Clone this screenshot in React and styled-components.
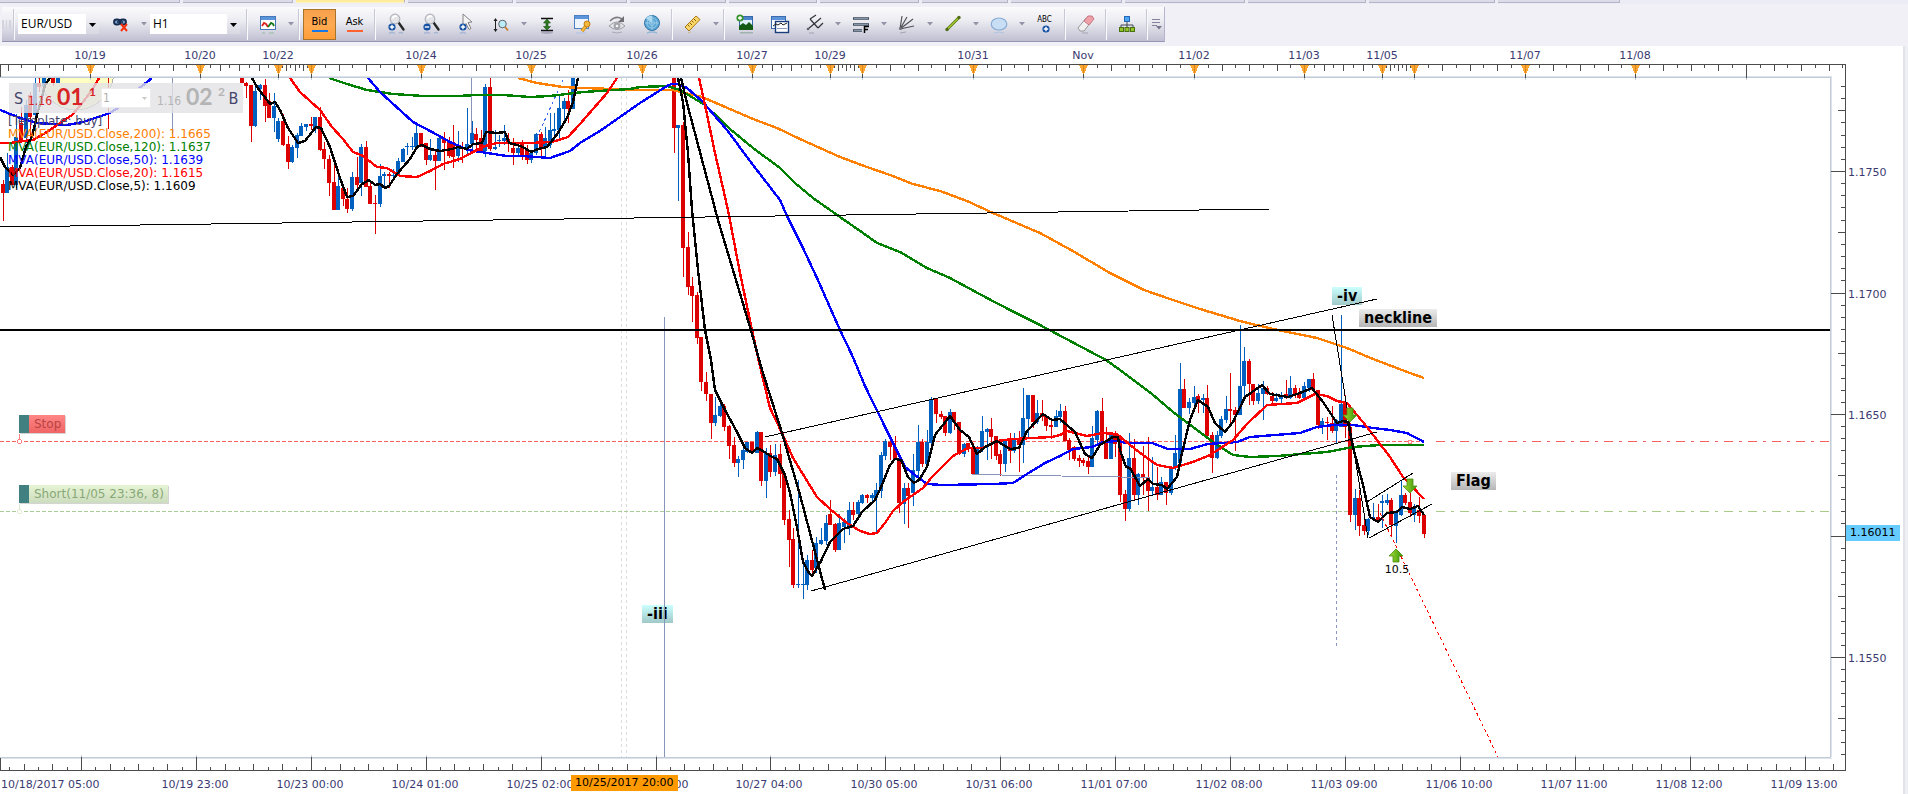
import React from "react";
import styled, { createGlobalStyle, css } from "styled-components";

const GlobalStyle = createGlobalStyle`
  * { box-sizing: border-box; }
  body {
    margin: 0;
    background: #eeeef5;
    font-family: "DejaVu Sans", Verdana, sans-serif;
    font-size: 11px;
  }
`;

/* ---------- page frame ---------- */

const Page = styled.div`
  display: flex;
  flex-direction: column;
  min-height: 100vh;
`;

const TabStrip = styled.div`
  display: flex;
  gap: 3px;
  height: 4px;
  background: #ececf4;
  overflow: hidden;
`;

const TabEdge = styled.div`
  flex: none;
  width: ${(p) => p.$width}px;
  height: 3px;
  background: ${(p) => (p.$active ? "#ffeb9c" : "#dcdce8")};
  border-bottom: 1px solid ${(p) => (p.$active ? "#fff3c4" : "#b4b4c8")};
  border-right: 1px solid #b4b4c8;
`;

const ToolbarZone = styled.div`
  display: flex;
  height: 42px;
  padding: 3px 0 4px 2px;
  background: #f0f0f6;
`;

/* ---------- toolbar ---------- */

const Toolbar = styled.div`
  display: flex;
  align-items: center;
  height: 35px;
  background: linear-gradient(#fbfbfd 0%, #ececf2 40%, #d6d6e2 70%, #bfbfd2 100%);
  border-bottom: 1px solid #9494b4;
  border-right: 1px solid #b4b4cc;
`;

const Grip = styled.div`
  width: 9px;
  height: 9px;
  border: solid #d4d4de;
  border-width: 0 2px;
  background: linear-gradient(90deg, transparent 40%, #d4d4de 40%, #d4d4de 60%, transparent 60%);
  background-clip: padding-box;
`;

const Separator = styled.div`
  width: 6px;
  height: 31px;
  background: linear-gradient(90deg, transparent 2px, #c8c8d6 2px, #c8c8d6 3px, #fafafc 3px, #fafafc 4px, transparent 4px);
`;

const ComboBox = styled.label`
  position: relative;
  display: flex;
  width: ${(p) => p.$width}px;
  height: 20px;
  margin: 0 4px 0 1px;
  background: #fff;
`;

const ComboSelect = styled.select`
  flex: 1;
  appearance: none;
  border: 0;
  padding: 0 16px 1px 3px;
  background: linear-gradient(#f4f4f8, #d8d8e2) right / 13px 100% no-repeat;
  color: #000;
  font-family: "Open Sans", "Segoe UI", sans-serif;
  font-size: 12px;
  line-height: 18px;
`;

const ComboArrow = styled.svg`
  position: absolute;
  right: 3px;
  top: 9px;
  pointer-events: none;
`;

const ToolButton = styled.button`
  display: flex;
  align-items: center;
  justify-content: center;
  width: ${(p) => (p.$narrow ? 11 : 35)}px;
  height: 31px;
  padding: 0;
  border: 0;
  background: none;
`;

const PriceSideButton = styled.button`
  display: flex;
  flex-direction: column;
  align-items: center;
  justify-content: center;
  gap: 2px;
  width: 33px;
  height: 31px;
  margin: 0 1px;
  padding: 0;
  border: 1px solid transparent;
  background: none;
  color: #000;
  font-family: "DejaVu Sans Condensed", "DejaVu Sans", sans-serif;
  font-size: 11px;
  line-height: 12px;
  ${(p) =>
    p.$active &&
    css`
      border-color: #a8742c;
      background: linear-gradient(#f6a04c, #ffab52 50%, #ff9c38);
    `}
`;

const Underline = styled.span`
  width: 16px;
  height: 2px;
  background: ${(p) => p.$color};
`;

const OverflowButton = styled(ToolButton)`
  width: 14px;
`;

/* ---------- toolbar icons ---------- */

const Icon = ({ children }) => (
  <svg width="20" height="22" viewBox="0 0 20 22" aria-hidden="true">
    {children}
  </svg>
);

const DropIcon = () => (
  <svg width="6" height="4" viewBox="0 0 6 4" aria-hidden="true">
    <path d="M0 0h6L3 3.6z" fill="#9494a8" />
  </svg>
);

const PlusDot = ({ x, y, minus }) => (
  <g>
    <circle cx={x} cy={y} r="3.6" fill="#1450a4" />
    <path d={`M${x - 2.2} ${y}h4.4${minus ? "" : `M${x} ${y - 2.2}v4.4`}`} stroke="#fff" strokeWidth="1.4" />
  </g>
);

const LinkOffIcon = () => (
  <Icon>
    <g fill="#7c9cc4" stroke="#142c50" strokeWidth="1.800">
      <rect x="3" y="6.500" width="6" height="5" rx="2.500" />
      <rect x="9" y="6.500" width="6" height="5" rx="2.500" />
    </g>
    <path d="M6 9h6" stroke="#142c50" strokeWidth="1.600" />
    <path d="M10 11l6 7M16 11l-6 7" stroke="#f8300c" strokeWidth="2" />
  </Icon>
);

const ChartWindowIcon = () => (
  <Icon>
    <rect x="2.500" y="3.500" width="15" height="13" fill="#fff" stroke="#4478b8" />
    <path d="M3 4h14v3H3z" fill="#5c94dc" />
    <path d="M4 13l2-3 2 1 2 3" fill="none" stroke="#e02020" strokeWidth="1.800" />
    <path d="M10 14l3-4 2 1 1 2" fill="none" stroke="#187818" strokeWidth="1.800" />
    <path d="M4 19h3v2H4zM11 19h5v2h-5z" fill="#a8c0b4" opacity=".7" />
  </Icon>
);

const MagnifierIcon = ({ minus }) => (
  <Icon>
    <path d="M12.500 9.500l5 7" stroke="#282828" strokeWidth="2.400" strokeLinecap="round" />
    <circle cx="9" cy="6" r="4.800" fill="#e4e4e8" stroke="#b4b4bc" strokeWidth="1.200" />
    <path d="M6.500 5.500a3 3 0 0 1 4.500-2" stroke="#fff" strokeWidth="1.800" fill="none" />
    <PlusDot x={6} y={14} minus={minus} />
    <path d="M3 20.500q3-2 6 0M13 20q2-1 4 0" stroke="#8ca4cc" strokeWidth="1.500" fill="none" opacity=".6" />
  </Icon>
);

const CursorPlusIcon = () => (
  <Icon>
    <path d="M7 1l9 8-4 .5 3 6-2 1-3-6-3 3z" fill="#f4f4f4" stroke="#848488" />
    <PlusDot x={7} y={14} />
    <path d="M4 20.500q3-2 6 0" stroke="#8ca4cc" strokeWidth="1.500" fill="none" opacity=".6" />
  </Icon>
);

const MeasureZoomIcon = () => (
  <Icon>
    <path d="M4.500 6v12" fill="none" stroke="#202020" />
    <path d="M2.500 8l2-3 2 3zM2.500 16l2 3 2-3z" fill="#202020" />
    <circle cx="11.500" cy="11" r="3.800" fill="#bcecf8" stroke="#606468" />
    <path d="M14 14l3 3.500" stroke="#c47828" strokeWidth="1.800" />
  </Icon>
);

const VerticalFitIcon = () => (
  <Icon>
    <path d="M4 5.500h12M4 17.500h12" stroke="#101010" strokeWidth="1.400" />
    <path d="M10 6l3.500 4H11v3.500h2.500L10 17l-3.500-3.500H9V10H6.500z" fill="#2c7c20" stroke="#184c10" strokeWidth=".6" />
    <ellipse cx="10" cy="19.500" rx="6" ry="1.500" fill="#8c8ca0" opacity=".6" />
  </Icon>
);

const WindowKeyIcon = () => (
  <Icon>
    <rect x="2.500" y="2.500" width="14" height="13" fill="#eef4fc" stroke="#4c80c0" />
    <path d="M3 3h13v3H3z" fill="#5c94dc" />
    <path d="M10 18l4-5" stroke="#c07c10" strokeWidth="3.600" />
    <path d="M10 18l4-5" stroke="#f4b83c" strokeWidth="2.200" />
    <circle cx="15" cy="11" r="3" fill="#f4b83c" stroke="#c07c10" />
    <path d="M4 19h10v2H4z" fill="#b8c8e4" opacity=".7" />
  </Icon>
);

const EyeRefreshIcon = () => (
  <Icon>
    <path d="M3 8q6-6 12-2" fill="none" stroke="#808084" strokeWidth="1.600" />
    <path d="M17 3v6h-6z" fill="#707074" />
    <path d="M2 13q8-8 16 0q-8 7-16 0z" fill="#e4e4e8" stroke="#9c9ca4" />
    <circle cx="10" cy="13" r="3.400" fill="#a4a4ac" />
    <circle cx="10" cy="13" r="1.300" fill="#f4f4f4" />
    <path d="M5 19q5 2 10 0" stroke="#a8a8b8" fill="none" />
  </Icon>
);

const RadarIcon = () => (
  <Icon>
    <circle cx="10" cy="10" r="7.500" fill="#58a4d4" stroke="#3478a8" />
    <path d="M10 10V2.500a7.500 7.500 0 0 0-6 3z" fill="#b0dcf4" />
    <circle cx="10" cy="10" r="5" fill="none" stroke="#a4d0e8" strokeWidth=".8" />
    <circle cx="10" cy="10" r="2.500" fill="none" stroke="#a4d0e8" strokeWidth=".8" />
    <path d="M10 3v14M3 10h14" stroke="#a4d0e8" strokeWidth=".8" />
    <path d="M5 20q5-2 10 0" stroke="#7cacd0" strokeWidth="1.500" fill="none" opacity=".7" />
  </Icon>
);

const RulerIcon = () => (
  <Icon>
    <path d="M2 14L13 3l4 3.500L6 18z" fill="#fcd868" stroke="#a87818" />
    <path d="M5 12l1.500 1.500M7 10l2 2M9 8l1.500 1.500M11 6l2 2" stroke="#805810" />
    <path d="M5 20l3-1" stroke="#c8b078" opacity=".7" />
  </Icon>
);

const AddImageIcon = () => (
  <Icon>
    <rect x="4.500" y="3.500" width="13" height="13" fill="#e0f0fc" stroke="#3468a8" />
    <path d="M5 4h12v3H5z" fill="#4c84cc" />
    <path d="M4 17v-4l4-3 3 2 3-3 4 4v4z" fill="#145c14" />
    <circle cx="5" cy="5" r="3.600" fill="#38942c" />
    <path d="M3 5h4M5 3v4" stroke="#fff" strokeWidth="1.300" />
    <path d="M5 19h13v1.500H5z" fill="#7c9c8c" opacity=".6" />
  </Icon>
);

const TwoWindowsIcon = () => (
  <Icon>
    <rect x="1.500" y="3.500" width="14" height="12" fill="#fff" stroke="#3c6cac" />
    <path d="M2 4h13v3H2z" fill="#5c94dc" />
    <rect x="5.500" y="8.500" width="13" height="11" fill="#fff" stroke="#183c7c" strokeWidth="1.400" />
    <path d="M3 13l3-2 2 1 3-2 2 2 4-2" fill="none" stroke="#202020" />
    <path d="M7 15.500h10" stroke="#8c9cc0" />
  </Icon>
);

const PitchforkIcon = () => (
  <Icon>
    <path d="M3 16l6-5M5 6l8 9M5 6l6-4M9 11l7-6M13 15l5-5" fill="none" stroke="#303438" strokeWidth="1.200" />
    <circle cx="3" cy="16" r="1.300" fill="#606468" />
    <path d="M4 20h5" stroke="#a0a0b4" />
  </Icon>
);

const FibLinesIcon = () => (
  <Icon>
    <path d="M2 5.500h16M2 11.500h16M2 17.500h9" stroke="#384858" strokeWidth="2.600" />
    <path d="M3 5.500h14M3 11.500h14M3 17.500h8" stroke="#9cacbc" strokeWidth=".8" />
    <path d="M13.500 20v-6.500H18M13.500 16.500h3.500" fill="none" stroke="#000" strokeWidth="1.500" />
  </Icon>
);

const FanIcon = () => (
  <Icon>
    <path d="M3 16L5 3M3 16l7-12M3 16L16 6M3 16l14-3" stroke="#505458" strokeWidth="1.200" />
    <circle cx="3.500" cy="15.500" r="1.600" fill="#707478" />
    <path d="M3 20l6-1" stroke="#a4a4b4" />
  </Icon>
);

const TrendLineIcon = () => (
  <Icon>
    <path d="M4 16.500L16 4.500" stroke="#4c6c08" strokeWidth="2.600" />
    <path d="M4 16.500L16 4.500" stroke="#a4cc2c" strokeWidth="1.400" />
    <circle cx="4" cy="16.500" r="1.700" fill="#506c18" />
    <circle cx="16" cy="4.500" r="1.700" fill="#506c18" />
  </Icon>
);

const EllipseIcon = () => (
  <Icon>
    <ellipse cx="10" cy="11" rx="7.800" ry="6" fill="#c8def4" stroke="#88acd4" strokeWidth="1.200" />
    <path d="M5 20q5-2 10 0" stroke="#b0c4e0" fill="none" />
  </Icon>
);

const AbcLabel = styled.span`
  font-family: "DejaVu Sans Condensed", "DejaVu Sans", sans-serif;
  font-size: 8px;
  line-height: 8px;
`;

const TextToolButton = styled(ToolButton)`
  flex-direction: column;
  color: #000;
`;

const EraserIcon = () => (
  <Icon>
    <path d="M2 15L10 5l5 4-7 9H4z" fill="#f0f0f0" stroke="#98989c" />
    <path d="M8 8l4-5h4l2 3-5 6z" fill="#f0a0a8" stroke="#c47880" />
    <path d="M6 20h6" stroke="#a4a4b4" />
  </Icon>
);

const TreeIcon = () => (
  <Icon>
    <path d="M10 8v6M4 15v-3h12v3" fill="none" stroke="#404858" />
    <rect x="7.500" y="3.500" width="5" height="5" fill="#4ca4f4" stroke="#2468b4" />
    <g fill="#94c42c" stroke="#48700c">
      <rect x="2.500" y="14.500" width="4" height="4" />
      <rect x="8" y="14.500" width="4" height="4" />
      <rect x="13.500" y="14.500" width="4" height="4" />
    </g>
  </Icon>
);

const OverflowIcon = () => (
  <svg width="10" height="12" viewBox="0 0 10 12" aria-hidden="true">
    <path d="M0 1.500h8M0 4.500h8M0 7.500h5" stroke="#84849c" />
    <path d="M4 8h6l-3 3.500z" fill="#74748c" />
  </svg>
);

const Combo = ({ label, value, width }) => (
  <ComboBox $width={width}>
    <ComboSelect aria-label={label} defaultValue={value}>
      <option>{value}</option>
    </ComboSelect>
    <ComboArrow width="7" height="4" viewBox="0 0 7 4" aria-hidden="true">
      <path d="M0 0h7L3.500 4z" fill="#000" />
    </ComboArrow>
  </ComboBox>
);

const Tool = ({ label, icon: IconShape, menu, ...rest }) => (
  <>
    <ToolButton aria-label={label}>
      <IconShape {...rest} />
    </ToolButton>
    {menu && (
      <ToolButton $narrow aria-label={`${label} options`}>
        <DropIcon />
      </ToolButton>
    )}
  </>
);

/* ---------- chart layout ---------- */

const ChartPanel = styled.main`
  flex: 1;
  display: grid;
  grid-template-columns: minmax(0, 1fr) 73px;
  grid-template-rows: 32px minmax(0, 1fr) 37px;
  margin-right: 3px;
  background: #fff;
  border-right: 2px solid #e2e2ea;
`;

const AxisSvg = styled.svg`
  display: block;
  width: 100%;
  height: 100%;
  overflow: visible;
  shape-rendering: crispEdges;
`;

const AxisCell = styled.div`
  position: relative;
  min-width: 0;
`;

const AxisText = styled.text`
  fill: ${(p) => (p.$dark ? "#000" : "#3a3a70")};
  font-family: "DejaVu Sans", Verdana, sans-serif;
  font-size: 11px;
`;

const Plot = styled.section`
  position: relative;
  overflow: hidden;
  min-width: 0;
`;

const PlotSvg = styled.svg`
  position: absolute;
  inset: 0;
  width: 100%;
  height: 100%;
  shape-rendering: crispEdges;
`;

const AxisFlag = styled.output`
  position: absolute;
  left: ${(p) => p.$x}px;
  top: ${(p) => p.$y}px;
  padding: 0 4px;
  background: ${(p) => p.$color};
  color: #000;
  font-size: 11px;
  line-height: 16px;
  white-space: nowrap;
`;

/* ---------- overlays on the plot ---------- */

const labelLook = {
  wave: "linear-gradient(#ccffff, #a0c8c8)",
  note: "linear-gradient(#ececec, #b6b6b6)",
};

const Annotation = styled.div`
  position: absolute;
  left: ${(p) => p.$x}px;
  top: ${(p) => p.$y}px;
  padding: 0 5px;
  background: ${(p) => labelLook[p.$look]};
  color: #000;
  font-family: "DejaVu Sans Condensed", "DejaVu Sans", sans-serif;
  font-size: 16px;
  font-weight: 700;
  line-height: 18px;
`;

const OrderTag = styled.div`
  position: absolute;
  left: 19px;
  top: ${(p) => p.$y}px;
  padding: 0 4px 0 5px;
  border-left: 10px solid #408080;
  background: ${(p) => (p.$stop ? "linear-gradient(#ff8686, #f06464)" : "linear-gradient(#e6f4d4, #ccdcbe)")};
  background-clip: padding-box;
  box-shadow: 1px 1px 0 #d4d4d4;
  color: ${(p) => (p.$stop ? "#b84444" : "#88a878")};
  font-size: 12px;
  line-height: 18px;
`;

const DealPanel = styled.form`
  position: absolute;
  left: 9px;
  top: 5px;
  display: flex;
  align-items: center;
  width: 234px;
  height: 30px;
  padding: 0 2px;
  background: rgba(226, 226, 230, 0.8);
`;

const SideButton = styled.button`
  padding: 0;
  width: 15px;
  border: 0;
  background: none;
  color: #44446c;
  font-family: "DejaVu Sans Condensed", "DejaVu Sans", sans-serif;
  font-size: 16px;
`;

const Quote = styled.div`
  display: flex;
  align-items: baseline;
  width: 71px;
  padding-left: 2px;
  color: ${(p) => (p.$bid ? "#d82424" : "#b4b4b4")};
  line-height: 24px;
`;

const QuoteBase = styled.span`
  width: 29px;
  font-family: "DejaVu Sans Condensed", "DejaVu Sans", sans-serif;
  font-size: 12px;
`;

const QuoteBig = styled.strong`
  width: 32px;
  font-family: Lato, sans-serif;
  font-size: 23px;
`;

const QuoteTick = styled.span`
  align-self: flex-start;
  font-family: Lato, sans-serif;
  font-size: 12px;
  font-weight: 700;
  line-height: 16px;
`;

const AmountBox = styled.label`
  position: relative;
  width: 50px;
  height: 20px;
  margin: 0 4px;
`;

const AmountInput = styled.input`
  width: 50px;
  height: 20px;
  padding: 0 1px;
  border: 1px solid #ececee;
  background: #fff;
  color: #b0b0b0;
  font-family: "DejaVu Sans Condensed", "DejaVu Sans", sans-serif;
  font-size: 12px;
`;

const AmountArrow = styled.svg`
  position: absolute;
  right: 4px;
  top: 9px;
`;

const Legend = styled.ul`
  position: absolute;
  left: 8px;
  top: 37px;
  margin: 0;
  padding: 0;
  list-style: none;
  font-size: 12px;
  line-height: 13px;
`;

const LegendLine = styled.li`
  color: ${(p) => p.$color};
`;

/* ---------- chart data ---------- */

const BAR_STEP = 4.6;

/* each bar: direction, high, body top, body bottom, low */
const SERIES = [
  {
    x: 3,
    bars: `r180,184,193,221 b153,167,193,193 r165,167,185,185 b114,137,185,188 r107,123,140,143 b100,105,138,143
    r92,95,117,138 b78,83,115,132 r78,83,87,92 b78,78,86,92 r78,78,78,78 r78,78,83,86 b78,78,83,83`,
  },
  {
    x: 242,
    bars: `r78,78,83,83 r82,83,86,98 r85,85,126,142 b87,91,126,127 b84,85,89,100 r79,85,106,122 r93,101,118,118
    b93,106,118,132 b118,121,139,142 r114,121,145,146 r136,144,162,169 b145,147,162,163 b133,135,148,158
    b123,126,136,136 b124,124,127,131 r117,124,126,130 b117,117,129,133 r107,117,150,151 r142,149,159,169
    r155,159,183,196 r165,182,210,210 b175,186,210,210 r185,188,199,206 r188,199,209,213 b172,177,209,211
    r157,177,185,190 b144,147,183,196 r141,147,187,187 r183,186,204,204 r195,203,204,234 b164,176,204,207
    b172,174,176,187 r172,174,176,188 b169,175,176,180 b158,161,175,176 b148,149,162,162 b143,146,147,155
    b137,146,147,150 b125,133,147,150 r133,133,145,147 r143,143,160,165 b139,155,160,161 r150,155,161,190
    b137,138,161,161 r132,138,143,170 r137,142,156,158 r125,142,157,168 b131,147,156,162 r142,147,149,163
    b108,144,150,154 b121,133,144,150 r128,134,140,149 r130,138,152,153 b84,87,151,157 r78,87,149,151
    b130,147,149,150 b135,140,141,147 b125,138,141,145 r133,139,144,152 r138,148,153,165 b145,148,153,157
    r140,143,157,160 r145,150,160,164 b150,153,160,163 b133,134,153,155 r132,134,147,157 b127,138,148,157
    b113,130,145,148 b113,129,131,142 b96,108,130,139 b98,101,109,122 r90,101,109,123 b78,78,109,109`,
  },
  {
    x: 674.3,
    bars: `r78,78,128,153 b125,125,128,201 r122,125,248,277 r232,247,287,295 r277,286,296,322 r292,295,338,344
    r337,337,382,391 r372,382,394,401 r394,394,423,439 b397,415,423,426 b399,406,416,417 r404,406,427,431
    r425,426,446,459 r437,445,463,467 b456,459,463,477 b442,450,460,469 b442,442,452,453 r442,442,452,453
    b431,432,453,453 r432,432,481,486 b448,453,481,498 r445,453,472,477 b444,455,472,476 r444,454,474,488
    r472,473,520,525 r510,519,540,567 r528,539,585,588 b480,584,585,588 b560,584,585,599 b555,560,585,590
    r550,560,570,573 b537,543,568,573 b528,540,544,545 b515,523,541,545 r500,514,525,525 r523,524,550,552
    b514,523,550,550 b518,522,527,543 b502,510,526,535 r502,510,515,520 b500,502,514,518 b494,495,503,504
    r494,495,498,503 b493,495,498,503 b483,490,498,532 b452,455,491,498 b439,441,456,460 r435,442,447,460
    r436,447,459,460 r458,459,503,513 b483,488,504,524 r483,488,496,528 b454,470,493,506 b425,442,471,481
    r439,442,464,467 b430,442,464,468 b397,399,443,445 r398,399,414,423 r411,414,417,419 r416,416,433,436
    b409,412,433,434 r412,412,422,430 r422,422,454,455 b443,444,454,457 r443,443,448,452 r443,447,474,474
    b446,447,474,474 b416,431,448,452 b428,429,432,460 r418,429,437,459 r436,436,456,460 r450,454,464,476
    b439,440,464,472 r433,439,451,463 b433,438,451,453 r431,438,445,472 b388,418,445,463 b395,395,419,437
    r395,395,422,428 b400,413,422,424 r400,413,417,421 r415,416,426,431 r421,425,427,439 b410,416,427,427
    b404,411,417,423 r406,411,441,441 r438,440,450,460 r446,447,459,461 r455,458,461,467 r458,460,463,466
    r456,461,467,474 b426,438,467,467 b410,411,440,445 r398,411,441,441 r427,441,459,459 b433,435,459,459
    r431,435,444,457 r435,438,495,502 r490,494,509,521 b433,458,509,511 r439,458,495,501 b473,474,495,505
    r446,474,477,495 r437,477,491,511 b457,487,491,495 r467,487,495,500 b477,482,495,495 r482,482,493,505
    b467,468,493,495 b435,453,468,470 b363,389,463,467 r379,389,408,408 b398,402,408,414 b386,397,403,407
    r394,396,400,413 b394,398,400,413 r385,398,436,438 r432,435,458,473 b431,435,458,459 b416,419,436,438
    b396,409,420,423 r373,409,411,427 r407,410,415,451 b325,386,415,415 b347,361,386,397 r359,361,384,405
    r384,384,401,405 b384,393,401,404 b381,388,394,420 r386,388,394,395 r392,396,401,405 b393,398,401,402
    b392,397,399,403 r380,394,398,399 b376,388,398,399 r385,388,395,398 r388,393,398,399 b382,386,398,399
    b379,379,388,392 r373,379,390,391 r390,390,425,429 b418,421,426,434 r417,422,423,440 r406,423,431,433
    b419,420,431,443 b315,404,427,427 r395,404,427,438 r423,427,515,522 b489,498,515,530 r490,498,526,536
    r513,525,531,535 b518,519,531,535 b503,517,519,520 r504,517,521,522 b495,501,503,528 b494,500,503,505
    r498,500,525,537 b510,512,526,543 b480,495,515,516 r493,495,503,505 r493,502,513,517 b504,507,515,522
    r497,510,516,523 r515,515,534,538`,
  },
];

const CANDLES = SERIES.flatMap(({ x, bars }) =>
  bars
    .trim()
    .split(/\s+/)
    .map((bar, i) => {
      const [high, top, bottom, low] = bar.slice(1).split(",").map(Number);
      return { x: Math.floor(x + i * BAR_STEP), up: bar[0] === "b", high, top, bottom, low };
    })
    .filter((bar) => bar.low > bar.high)
);

const AVERAGES = [
  {
    color: "#ff8000",
    lines: [
      "518,78 537,83 563,87 583,88 613,89 640,90 673,90 702,97 723,106 753,119 777,128 800,139 840,157 867,167 890,175 913,184 940,191 967,201 993,213 1040,233 1071,250 1110,273 1144,290 1170,299 1200,309 1240,321 1273,329 1317,338 1347,348 1373,359 1410,373 1424,378",
    ],
  },
  {
    color: "#008000",
    lines: [
      "329,78 347,84 367,90 393,94 423,96 457,96 477,95 503,95 530,97 550,96 583,92 630,89 640,87 667,86 680,90 705,105 730,129 753,148 780,168 795,183 813,198 840,217 863,233 877,243 900,252 927,268 950,278 987,298 1010,310 1040,325 1106,360 1120,370 1152,394 1173,412 1193,427 1213,442 1233,455 1250,457 1277,456 1327,452 1353,447 1380,445 1424,445",
    ],
  },
  {
    color: "#0000ff",
    lines: [
      "0,110 20,118 37,123 67,125 83,122 110,113 127,102 137,90 152,78",
      "368,78 380,92 413,122 432,132 450,142 468,150 487,153 507,156 523,156 537,157 550,158 570,151 580,143 600,131 610,124 640,103 667,86 672,84 678,84 687,88 702,101 727,130 753,165 780,200 787,216 803,248 817,278 840,330 852,355 865,386 887,431 905,467 915,475 927,484 943,485 993,484 1013,483 1027,474 1045,463 1060,456 1073,449 1092,447 1103,442 1117,441 1127,443 1152,443 1168,449 1190,449 1208,444 1237,442 1250,437 1275,435 1300,433 1317,427 1333,425 1353,425 1373,428 1390,430 1407,433 1424,442",
    ],
  },
  {
    color: "#ff0000",
    lines: [
      "0,143 10,143 23,141 33,140 47,132 60,123 72,115 83,102 92,90 99,78",
      "290,78 300,92 320,110 332,127 343,139 353,152 363,156 377,167 387,168 400,176 417,177 430,171 443,164 460,159 475,151 485,146 497,143 530,143 552,142 568,137 580,124 593,109 607,93 617,78",
      "699,78 705,105 715,153 728,210 740,273 752,330 759,362 770,408 782,433 793,458 817,497 830,509 847,523 860,531 870,534 877,533 885,523 893,511 903,502 923,488 932,477 953,456 968,448 983,448 997,441 1013,439 1052,437 1060,435 1067,431 1087,436 1103,433 1117,434 1130,445 1143,455 1157,465 1173,468 1193,462 1210,455 1233,440 1247,424 1267,405 1297,403 1315,394 1327,396 1337,401 1347,403 1367,427 1390,457 1403,477 1424,499",
    ],
  },
  {
    color: "#000000",
    lines: [
      "0,157 5,167 13,175 20,168 26,147 32,137 37,115 42,97 45,85 50,78",
      "252,78 257,87 270,104 275,102 280,110 288,128 298,143 305,141 316,127 321,128 330,147 340,178 347,197 353,196 362,184 369,180 375,185 380,184 385,188 389,186 397,174 410,159 417,147 422,145 430,149 440,151 452,149 458,147 467,149 473,144 482,143 486,132 497,133 505,132 509,143 517,145 523,147 531,152 538,149 547,147 558,133 567,118 573,102 578,78",
      "678,78 683,102 688,153 692,210 698,270 705,330 711,360 715,390 725,410 737,432 745,448 752,453 757,448 763,451 772,457 777,459 785,475 790,493 797,527 803,562 809,573 812,576 820,563 830,542 843,529 853,526 862,512 875,500 882,485 890,465 895,459 901,460 908,477 914,483 919,480 927,467 935,435 950,416 960,430 969,437 977,454 985,447 997,441 1010,449 1019,448 1027,431 1043,414 1052,420 1060,419 1075,432 1085,454 1092,458 1100,445 1113,437 1118,437 1120,450 1126,467 1130,468 1140,486 1148,479 1153,484 1162,485 1167,489 1177,477 1182,453 1190,420 1198,400 1208,407 1215,423 1225,432 1233,422 1245,397 1262,385 1270,394 1288,397 1300,393 1312,388 1323,402 1337,423 1343,421 1348,422 1353,447 1363,485 1370,517 1378,522 1387,513 1397,512 1402,507 1410,509 1418,506 1424,515",
      "681,78 688,107 718,220 750,327 762,370 782,433 800,495 825,590",
    ],
  },
];

const TREND_LINES = [
  "0,227 1270,209",
  "765,437 1377,299",
  "811,591 1377,432",
  "1332,315 1368,538",
  "1367,502 1413,473",
  "1369,538 1432,504",
];

const LEGEND = [
  ["[Template: buy]", "#44446c"],
  ["MVA(EUR/USD.Close,200): 1.1665", "#ff8000"],
  ["MVA(EUR/USD.Close,120): 1.1637", "#008000"],
  ["MVA(EUR/USD.Close,50): 1.1639", "#0000ff"],
  ["MVA(EUR/USD.Close,20): 1.1615", "#ff0000"],
  ["MVA(EUR/USD.Close,5): 1.1609", "#000000"],
];

const SESSIONS = [
  [-20],
  [90, "10/19"],
  [200, "10/20"],
  [278, "10/22"],
  [311, ""],
  [421, "10/24"],
  [531, "10/25"],
  [642, "10/26"],
  [752, "10/27"],
  [830, "10/29"],
  [862, ""],
  [973, "10/31"],
  [1083, "Nov"],
  [1194, "11/02"],
  [1304, "11/03"],
  [1382, "11/05"],
  [1414, ""],
  [1525, "11/07"],
  [1635, "11/08"],
  [1746],
  [1856],
];

const TIME_LABELS = [
  "", "10/19 23:00", "10/23 00:00", "10/24 01:00", "10/25 02:00", "10/26 03:00", "10/27 04:00", "10/30 05:00",
  "10/31 06:00", "11/01 07:00", "11/02 08:00", "11/03 09:00", "11/06 10:00", "11/07 11:00", "11/08 12:00", "11/09 13:00",
];

const TAB_WIDTHS = [180, 110, 109, 105, 111, 96, 88, 99, 86, 111, 120, 118, 126, 122];

const TIME_STEP = 114.9;
const AXIS = "#4c4c4c";
const FRAME = "#c2ccd8";
const FRAME_SOFT = "#dee2ea";

/* ---------- chart parts ---------- */

const SessionAxis = () => (
  <AxisSvg>
    <rect x="0" y="30" width="100%" height="1" fill={FRAME_SOFT} />
    <rect x="0" y="31" width="100%" height="1" fill={FRAME} />
    <rect x="0" y="18" width="100%" height="1" fill={AXIS} />
    <rect x="0" y="18" width="1" height="13" fill={AXIS} />
    {SESSIONS.slice(0, -1).map(([x], i) => {
      const step = (SESSIONS[i + 1][0] - x) / 8;
      return [1, 2, 3, 4, 5, 6, 7].map((k) => {
        const tx = Math.round(x + k * step);
        return tx >= 0 && tx < 1845 ? (
          <rect key={`${i}-${k}`} x={tx} y="19" width="1" height={k % 2 ? 3 : 6} fill={AXIS} />
        ) : null;
      });
    })}
    {SESSIONS.map(([x, label]) =>
      x > 0 && x < 1845 ? (
        <g key={x}>
          <rect x={x} y="19" width="1" height="13" fill={AXIS} />
          {label !== undefined && (
            <>
              <path d={`M${x - 4} 19h9l-4 9h-1z`} fill="#ffa530" />
              <rect x={x} y="19" width="1" height="8" fill="#d88818" />
            </>
          )}
          {label && (
            <AxisText x={x} y="13" textAnchor="middle">
              {label}
            </AxisText>
          )}
        </g>
      ) : null
    )}
  </AxisSvg>
);

const TopCorner = () => (
  <AxisSvg>
    <rect x="0" y="18" width="16" height="1" fill={AXIS} />
    <rect x="15" y="18" width="1" height="14" fill={AXIS} />
    <rect x="0" y="30" width="2" height="1" fill={FRAME_SOFT} />
    <rect x="0" y="31" width="1" height="1" fill={FRAME} />
    <rect x="1" y="31" width="1" height="1" fill={FRAME_SOFT} />
  </AxisSvg>
);

const PriceAxis = () => {
  const ticks = [];
  for (let k = -7; k <= 48; k += 1) {
    const y = Math.round(93 + k * 12.15);
    const len = k % 10 === 0 ? 14 : k % 5 === 0 ? 7 : 4;
    ticks.push(<rect key={k} x={15 - len} y={y} width={len} height="1" fill={AXIS} />);
  }
  return (
    <AxisSvg>
      <rect x="0" y="0" width="1" height="100%" fill={FRAME} />
      <rect x="1" y="0" width="1" height="100%" fill={FRAME_SOFT} />
      <rect x="15" y="0" width="1" height="100%" fill={AXIS} />
      {ticks}
      <AxisText x="18" y="98">1.1750</AxisText>
      <AxisText x="18" y="220">1.1700</AxisText>
      <AxisText x="18" y="341">1.1650</AxisText>
      <AxisText x="18" y="584">1.1550</AxisText>
    </AxisSvg>
  );
};

const TimeAxis = () => {
  const ticks = [];
  for (let k = -5; k <= 122; k += 1) {
    const len = k % 8 === 0 ? 13 : k % 2 === 0 ? 6 : 3;
    ticks.push(
      <rect key={k} x={Math.round(81 + (k * TIME_STEP) / 8)} y={13 - len} width="1" height={len} fill={AXIS} />
    );
  }
  return (
    <AxisSvg>
      <rect x="0" y="0" width="100%" height="1" fill={FRAME} />
      <rect x="0" y="1" width="100%" height="1" fill={FRAME_SOFT} />
      <rect x="0" y="1" width="1" height="13" fill={AXIS} />
      <rect x="0" y="13" width="100%" height="1" fill={AXIS} />
      {ticks}
      <AxisText x="1" y="31">10/18/2017 05:00</AxisText>
      {TIME_LABELS.map((label, i) =>
        label ? (
          <AxisText key={label} x={Math.round(80 + i * TIME_STEP)} y="31" textAnchor="middle">
            {label}
          </AxisText>
        ) : null
      )}
    </AxisSvg>
  );
};

const BottomCorner = () => (
  <AxisSvg>
    <rect x="0" y="0" width="1" height="1" fill={FRAME} />
    <rect x="0" y="1" width="2" height="1" fill={FRAME_SOFT} />
    <rect x="0" y="13" width="16" height="1" fill={AXIS} />
    <rect x="15" y="0" width="1" height="13" fill={AXIS} />
  </AxisSvg>
);

const TradeArrow = ({ x, y, up }) => (
  <path
    d={up ? `M${x} ${y}l7 7h-4v6h-6v-6h-4z` : `M${x} ${y + 14}l-7-7h4v-7h6v7h4z`}
    fill="url(#arrowFill)"
    stroke="#4c9010"
    strokeWidth=".8"
    shapeRendering="auto"
  />
);

/* the drawing keeps its origin at the top of the window; the plot starts 78 below it */
const PriceDrawing = () => (
  <PlotSvg>
    <defs>
      <linearGradient id="arrowFill">
        <stop offset="0" stopColor="#a8dc30" />
        <stop offset="1" stopColor="#34940c" />
      </linearGradient>
    </defs>
    <g transform="translate(0 -78)" fill="none">
      <ellipse cx="76" cy="70" rx="38" ry="40" fill="#ffffc4" stroke="#b0b0a8" />
      {SESSIONS.map(([x]) => (
        <rect key={x} x={x} y="78" width="1" height="2" fill={FRAME} />
      ))}
      {TIME_LABELS.map((label, i) => (
        <rect key={i} x={Math.round(81 + i * TIME_STEP)} y="755" width="1" height="2" fill={FRAME} />
      ))}
      <path d="M621.500 78V757M626.500 78V757" stroke="#dcdcdc" strokeDasharray="3 3" />
      <path d="M172.500 78V134M471.500 78V133M664.500 317V757" stroke="#8894b8" />
      <path d="M0 441.500H1424" stroke="#f86060" strokeDasharray="4 2" />
      <path d="M1436 441.500H1830" stroke="#f86060" strokeDasharray="9 6 3 6" />
      <path d="M0 511.500H1424" stroke="#a8cc98" strokeDasharray="4 2" />
      <path d="M1436 511.500H1830" stroke="#a8cc88" strokeDasharray="9 6 3 6" />
      <path d="M108.500 78V129" stroke="#dd0000" />
      {CANDLES.map((c, i) => (
        <g key={i} fill={c.up ? "#0060c0" : "#dd0000"}>
          <rect x={c.x} y={c.high} width="1" height={c.low - c.high} />
          <rect x={c.x - 2} y={c.top} width="4" height={Math.max(1, c.bottom - c.top)} />
        </g>
      ))}
      <path d="M972 474.500L1150 477.500" stroke="#8894b8" />
      <path d="M537 137L563 80" stroke="#3c6cf0" strokeDasharray="3 3" />
      <path d="M1336.500 475V646" stroke="#8c94c0" strokeDasharray="3 3" />
      {AVERAGES.map(({ color, lines }) =>
        lines.map((points) => (
          <polyline key={points} points={points} stroke={color} strokeWidth="2.400" strokeLinejoin="round" />
        ))
      )}
      <path d="M0 330H1830" stroke="#000" strokeWidth="2" />
      {TREND_LINES.map((points) => (
        <polyline key={points} points={points} stroke="#000" />
      ))}
      <path d="M1380 513L1498 757" stroke="#ff0000" strokeDasharray="3 3" />
      <path d="M19.500 434v5" stroke="#ff8080" />
      <circle cx="19.500" cy="441.500" r="2" fill="#fff" stroke="#ff8080" />
      <path d="M19.500 504v5" stroke="#e0ecd0" />
      <circle cx="19.500" cy="511.500" r="2" fill="#fff" stroke="#e0ecd0" />
      <circle cx="1410" cy="442" r="2" fill="#fff" stroke="#ff8080" />
      <TradeArrow x={1350} y={408} />
      <TradeArrow x={1410} y={479} />
      <TradeArrow x={1396} y={549} up />
      <AxisText $dark x="1397" y="573" textAnchor="middle">10.5</AxisText>
    </g>
  </PlotSvg>
);

const DealTicket = () => (
  <DealPanel onSubmit={(e) => e.preventDefault()}>
    <SideButton type="button" aria-label="Sell">S</SideButton>
    <Quote $bid>
      <QuoteBase>1.16</QuoteBase>
      <QuoteBig>01</QuoteBig>
      <QuoteTick>1</QuoteTick>
    </Quote>
    <AmountBox>
      <AmountInput aria-label="Amount" defaultValue="1" />
      <AmountArrow width="5" height="3" viewBox="0 0 5 3" aria-hidden="true">
        <path d="M0 0h5L2.500 3z" fill="#c8c8c8" />
      </AmountArrow>
    </AmountBox>
    <Quote>
      <QuoteBase>1.16</QuoteBase>
      <QuoteBig>02</QuoteBig>
      <QuoteTick>2</QuoteTick>
    </Quote>
    <SideButton type="button" aria-label="Buy">B</SideButton>
  </DealPanel>
);

export default function App() {
  return (
    <Page>
      <GlobalStyle />
      <TabStrip>
        {TAB_WIDTHS.map((w, i) => (
          <TabEdge key={i} $width={w} $active={i === 2} />
        ))}
      </TabStrip>
      <ToolbarZone>
        <Toolbar role="toolbar" aria-label="Chart tools">
          <Grip />
          <Separator />
          <Combo label="Instrument" value="EUR/USD" width={81} />
          <Tool label="Unlink chart" icon={LinkOffIcon} menu />
          <Combo label="Period" value="H1" width={90} />
          <Separator />
          <Tool label="Chart type" icon={ChartWindowIcon} menu />
          <Separator />
          <PriceSideButton $active aria-pressed="true">
            Bid
            <Underline $color="#1478e8" />
          </PriceSideButton>
          <PriceSideButton aria-pressed="false">
            Ask
            <Underline $color="#ff6030" />
          </PriceSideButton>
          <Separator />
          <Tool label="Zoom in" icon={MagnifierIcon} />
          <Tool label="Zoom out" icon={MagnifierIcon} minus />
          <Tool label="Pointer zoom" icon={CursorPlusIcon} />
          <Tool label="Scale" icon={MeasureZoomIcon} menu />
          <Tool label="Fit height" icon={VerticalFitIcon} />
          <Tool label="Chart properties" icon={WindowKeyIcon} />
          <Tool label="Refresh view" icon={EyeRefreshIcon} />
          <Tool label="Data window" icon={RadarIcon} />
          <Separator />
          <Tool label="Ruler" icon={RulerIcon} menu />
          <Separator />
          <Tool label="Add indicator" icon={AddImageIcon} />
          <Tool label="Indicator windows" icon={TwoWindowsIcon} />
          <Tool label="Pitchfork" icon={PitchforkIcon} menu />
          <Tool label="Fibonacci" icon={FibLinesIcon} menu />
          <Tool label="Fan" icon={FanIcon} menu />
          <Tool label="Line" icon={TrendLineIcon} menu />
          <Tool label="Shape" icon={EllipseIcon} menu />
          <TextToolButton aria-label="Text label">
            <AbcLabel>ABC</AbcLabel>
            <svg width="10" height="9" viewBox="0 0 10 9" aria-hidden="true">
              <PlusDot x={6} y={5} />
            </svg>
          </TextToolButton>
          <Separator />
          <Tool label="Eraser" icon={EraserIcon} />
          <Separator />
          <Tool label="Object tree" icon={TreeIcon} />
          <Separator />
          <OverflowButton aria-label="More tools">
            <OverflowIcon />
          </OverflowButton>
        </Toolbar>
      </ToolbarZone>
      <ChartPanel>
        <AxisCell>
          <SessionAxis />
        </AxisCell>
        <AxisCell>
          <TopCorner />
        </AxisCell>
        <Plot>
          <Annotation $look="wave" $x={642} $y={527}>-iii</Annotation>
          <Annotation $look="wave" $x={1332} $y={209}>-iv</Annotation>
          <Annotation $look="note" $x={1359} $y={231}>neckline</Annotation>
          <Annotation $look="note" $x={1451} $y={394}>Flag</Annotation>
          <PriceDrawing />
          <OrderTag $stop $y={337}>Stop</OrderTag>
          <OrderTag $y={407}>Short(11/05 23:36, 8)</OrderTag>
          <Legend>
            {LEGEND.map(([text, color]) => (
              <LegendLine key={text} $color={color}>
                {text}
              </LegendLine>
            ))}
          </Legend>
          <DealTicket />
        </Plot>
        <AxisCell>
          <PriceAxis />
          <AxisFlag $x={16} $y={447} $color="#66ccff">1.16011</AxisFlag>
        </AxisCell>
        <AxisCell>
          <TimeAxis />
          <AxisFlag $x={571} $y={18} $color="#ff9900">10/25/2017 20:00</AxisFlag>
        </AxisCell>
        <AxisCell>
          <BottomCorner />
        </AxisCell>
      </ChartPanel>
    </Page>
  );
}
